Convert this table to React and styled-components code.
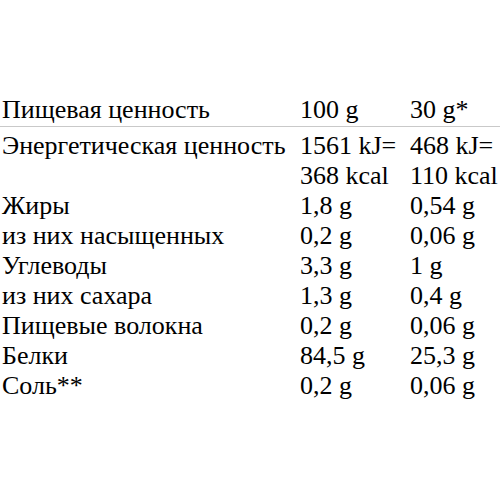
import React from "react";
import styled, { createGlobalStyle } from "styled-components";

const GlobalStyle = createGlobalStyle`
  body {
    margin: 0;
    background: #ffffff;
  }
`;

const Page = styled.div`
  width: 500px;
  padding-top: 95px;
  font-family: "Liberation Serif", serif;
  font-size: 26px;
  line-height: 30px;
  color: #000;
`;

const Row = styled.div`
  display: grid;
  grid-template-columns: 298px 110px 92px;
  border-bottom: ${(p) => (p.$head ? "1px solid #c9c9c9" : "none")};
  padding-bottom: ${(p) => (p.$head ? "1px" : "0")};
  padding-top: ${(p) => (p.$first ? "4px" : "0")};
`;

const Cell = styled.div`
  padding-left: 2px;
  white-space: nowrap;
`;

const rows = [
  ["Жиры", "1,8 g", "0,54 g"],
  ["из них насыщенных", "0,2 g", "0,06 g"],
  ["Углеводы", "3,3 g", "1 g"],
  ["из них сахара", "1,3 g", "0,4 g"],
  ["Пищевые волокна", "0,2 g", "0,06 g"],
  ["Белки", "84,5 g", "25,3 g"],
  ["Соль**", "0,2 g", "0,06 g"],
];

export default function App() {
  return (
    <>
      <GlobalStyle />
      <Page>
        <Row $head>
          <Cell>Пищевая ценность</Cell>
          <Cell>100 g</Cell>
          <Cell>30 g*</Cell>
        </Row>
        <Row $first>
          <Cell>Энергетическая ценность</Cell>
          <Cell>
            1561 kJ=
            <br />
            368 kcal
          </Cell>
          <Cell>
            468 kJ=
            <br />
            110 kcal
          </Cell>
        </Row>
        {rows.map((r) => (
          <Row key={r[0]}>
            <Cell>{r[0]}</Cell>
            <Cell>{r[1]}</Cell>
            <Cell>{r[2]}</Cell>
          </Row>
        ))}
      </Page>
    </>
  );
}
